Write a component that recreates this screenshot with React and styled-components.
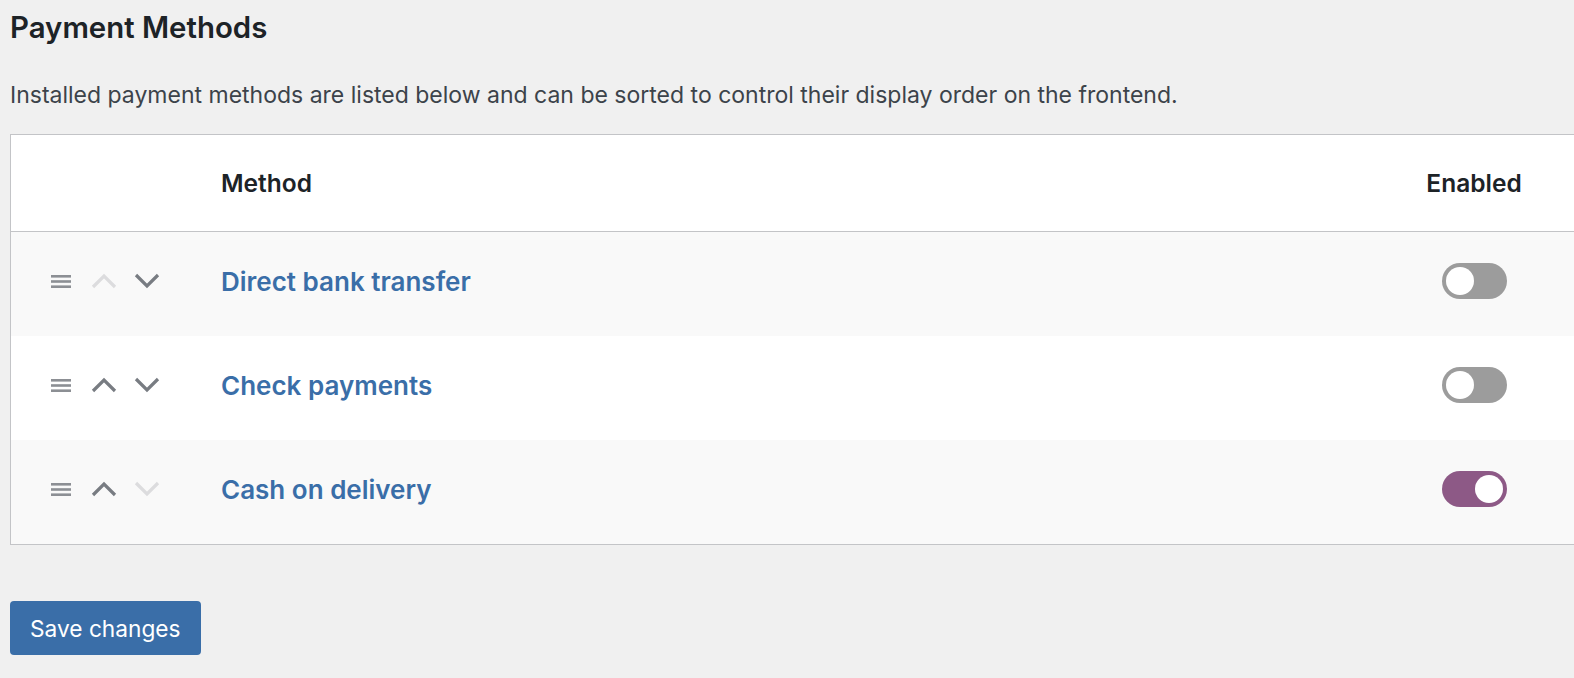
import React from "react";
import styled, { createGlobalStyle } from "styled-components";

const GlobalStyle = createGlobalStyle`
  html, body {
    margin: 0;
    padding: 0;
    background: #f0f0f0;
    overflow: hidden;
  }
  body {
    font-family: Inter, "Noto Sans", "Liberation Sans", sans-serif;
    color: #1d2327;
  }
`;

const methods = [
  { id: "bacs", title: "Direct bank transfer", enabled: false, canUp: false, canDown: true },
  { id: "cheque", title: "Check payments", enabled: false, canUp: true, canDown: true },
  { id: "cod", title: "Cash on delivery", enabled: true, canUp: true, canDown: false },
];

function DragIcon() {
  return (
    <svg width="20" height="15" viewBox="0 0 20 15">
      <rect x="0" y="1" width="20" height="2.6" fill="#8c8f94" />
      <rect x="0" y="6.2" width="20" height="2.6" fill="#8c8f94" />
      <rect x="0" y="11.4" width="20" height="2.6" fill="#8c8f94" />
    </svg>
  );
}

function Chevron({ up, disabled }) {
  return (
    <svg width="26" height="16" viewBox="0 0 26 16">
      <path
        d={up ? "M2 14 L13 3 L24 14" : "M2 2 L13 13 L24 2"}
        fill="none"
        stroke={disabled ? "#dcdcde" : "#787c82"}
        strokeWidth="3.2"
      />
    </svg>
  );
}

export default function App() {
  return (
    <>
      <GlobalStyle />
      <Page>
        <Title>Payment Methods</Title>
        <Description>
          Installed payment methods are listed below and can be sorted to
          control their display order on the frontend.
        </Description>
        <Table>
          <HeadRow>
            <Cell />
            <HeadCell>Method</HeadCell>
            <HeadCell center>Enabled</HeadCell>
            <Cell />
          </HeadRow>
          {methods.map((m, i) => (
            <Row key={m.id} striped={i % 2 === 0}>
              <SortCell>
                <DragIcon />
                <ArrowButton>
                  <Chevron up disabled={!m.canUp} />
                </ArrowButton>
                <ArrowButton>
                  <Chevron disabled={!m.canDown} />
                </ArrowButton>
              </SortCell>
              <Cell>
                <MethodLink href="#">{m.title}</MethodLink>
              </Cell>
              <Cell center>
                <Toggle on={m.enabled}>
                  <Knob on={m.enabled} />
                </Toggle>
              </Cell>
              <Cell />
            </Row>
          ))}
        </Table>
        <SaveButton>Save changes</SaveButton>
      </Page>
    </>
  );
}

const Page = styled.div`
  padding: 0 0 0 10px;
`;

const Title = styled.h2`
  margin: 0;
  padding-top: 10px;
  font-size: 29.4px;
  font-weight: 600;
  line-height: 36px;
  color: #1d2327;
`;

const Description = styled.p`
  margin: 34px 0 0;
  font-size: 23px;
  line-height: 30px;
  color: #3c434a;
`;

const Table = styled.div`
  margin-top: 24px;
  width: 1620px;
  background: #fff;
  border: 1px solid #c3c4c7;
`;

const HeadRow = styled.div`
  display: grid;
  grid-template-columns: 210px 1188px 130px 1fr;
  align-items: center;
  height: 96px;
  border-bottom: 1px solid #c3c4c7;
`;

const Row = styled.div`
  display: grid;
  grid-template-columns: 210px 1188px 130px 1fr;
  align-items: center;
  height: 104px;
  background: ${({ striped }) => (striped ? "#f9f9f9" : "#fff")};
`;

const Cell = styled.div`
  display: flex;
  align-items: center;
  justify-content: ${({ center }) => (center ? "center" : "flex-start")};
  padding-bottom: 6px;
`;

const HeadCell = styled(Cell)`
  font-size: 24.5px;
  font-weight: 600;
  color: #1d2327;
  padding-bottom: 0;
`;

const SortCell = styled(Cell)`
  padding-left: 40px;
  & > svg {
    margin-right: 20px;
  }
`;

const ArrowButton = styled.span`
  display: inline-flex;
  width: 43px;
`;

const MethodLink = styled.a`
  font-size: 26px;
  font-weight: 600;
  color: #3a6ea8;
  text-decoration: none;
`;

const Toggle = styled.span`
  display: inline-flex;
  align-items: center;
  justify-content: ${({ on }) => (on ? "flex-end" : "flex-start")};
  width: 65px;
  height: 36px;
  padding: 0 4px;
  box-sizing: border-box;
  border-radius: 18px;
  background: ${({ on }) => (on ? "#8d5986" : "#9c9c9c")};
`;

const Knob = styled.span`
  width: 28px;
  height: 28px;
  border-radius: 50%;
  background: #fff;
`;

const SaveButton = styled.button`
  margin-top: 56px;
  height: 54px;
  padding: 0 20px;
  border: none;
  border-radius: 4px;
  background: #3a6ea8;
  color: #fff;
  font-family: Inter, "Noto Sans", "Liberation Sans", sans-serif;
  font-size: 22.7px;
  cursor: pointer;
`;
